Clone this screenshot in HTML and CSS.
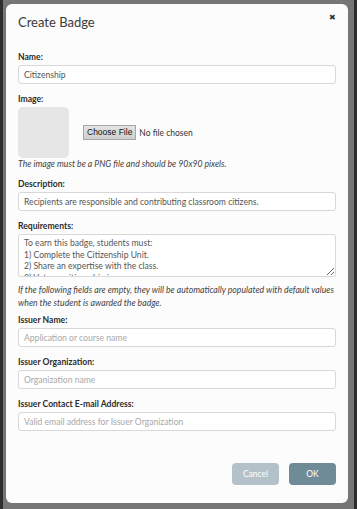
FILE: index.html
```html
<!DOCTYPE html>
<html lang="en">
<head>
  <meta charset="UTF-8">
  <title>Create Badge</title>
  <link rel="stylesheet" href="styles.css">
</head>
<body>
  <div class="backdrop">
    <div class="modal">
      <div class="modal-header">
        <h2>Create Badge</h2>
        <span class="close">&#x2716;</span>
      </div>

      <form class="modal-body">
        <label>Name:</label>
        <input type="text" value="Citizenship">

        <label>Image:</label>
        <div class="image-row">
          <div class="image-box"></div>
          <span class="file-btn">Choose File</span>
          <span class="file-name">No file chosen</span>
        </div>
        <p class="note">The image must be a PNG file and should be 90x90 pixels.</p>

        <label>Description:</label>
        <input type="text" value="Recipients are responsible and contributing classroom citizens.">

        <label>Requirements:</label>
        <textarea>To earn this badge, students must:
1) Complete the Citizenship Unit.
2) Share an expertise with the class.
3) Vote on citizenship issues.</textarea>

        <p class="note note-wide">If the following fields are empty, they will be automatically populated with default values when the student is awarded the badge.</p>

        <label>Issuer Name:</label>
        <input type="text" placeholder="Application or course name">

        <label>Issuer Organization:</label>
        <input type="text" placeholder="Organization name">

        <label>Issuer Contact E-mail Address:</label>
        <input type="text" placeholder="Valid email address for Issuer Organization">
      </form>

      <div class="modal-footer">
        <button type="button" class="btn btn-cancel">Cancel</button>
        <button type="button" class="btn btn-ok">OK</button>
      </div>
    </div>
  </div>
</body>
</html>
```

FILE: styles.css
```css
html, body {
  margin: 0;
  padding: 0;
  height: 100%;
}

body {
  background: #2e2e2e;
  font-family: "Lato", "Noto Sans", sans-serif;
  color: #333;
}

.backdrop {
  box-sizing: border-box;
  height: 509px;
  margin: 0 3px;
  padding: 4px 3px 6px 3px;
  background: #767676;
}

.modal {
  box-sizing: border-box;
  height: 499px;
  width: 342px;
  background: #fcfcfc;
  border-radius: 6px;
  padding: 8px 12px 18px 12px;
  display: flex;
  flex-direction: column;
}

.modal-header {
  display: flex;
  justify-content: space-between;
  align-items: flex-start;
  height: 30px;
}

.modal-header h2 {
  margin: 0;
  font-size: 13px;
  line-height: 20px;
  font-weight: 400;
  color: #3a3a3a;
}

.close {
  font-size: 8px;
  line-height: 10px;
  margin-top: 0;
  color: #333;
}

.modal-body {
  display: flex;
  flex-direction: column;
  margin-top: 10px;
}

label {
  font-size: 8.6px;
  font-weight: 700;
  line-height: 10px;
  color: #2c2c2c;
  margin-top: 10px;
  margin-bottom: 3px;
}

label:first-child {
  margin-top: 0;
}

input, textarea {
  box-sizing: border-box;
  width: 100%;
  height: 19px;
  border: 1px solid #d8d8d8;
  border-radius: 3px;
  background: #fff;
  font-family: "Lato", "Noto Sans", sans-serif;
  font-size: 8.6px;
  color: #555;
  padding: 0 5px;
  margin: 0;
}

input::placeholder {
  color: #a8a8a8;
}

textarea {
  height: 43px;
  padding: 3px 5px;
  line-height: 11.5px;
  resize: vertical;
  overflow: hidden;
}

.image-row {
  display: flex;
  align-items: center;
}

.image-box {
  width: 51px;
  height: 51px;
  background: #e6e6e6;
  border-radius: 5px;
}

.file-btn {
  margin-left: 14px;
  padding: 1px 3px;
  font-family: "Liberation Sans", sans-serif;
  font-size: 8.5px;
  line-height: 11px;
  color: #111;
  background: linear-gradient(#e4e4e4, #cfcfcf);
  border: 1px solid #a6a6a6;
}

.file-name {
  margin-left: 3px;
  font-size: 8.5px;
  color: #333;
}

.note {
  margin: 1px 0 0 0;
  font-size: 8.7px;
  line-height: 10px;
  font-style: italic;
  color: #444;
}

.note-wide {
  margin-top: 6px;
  line-height: 13px;
}

.note-wide + label {
  margin-top: 6px;
}

.modal-footer {
  margin-top: auto;
  display: flex;
  justify-content: flex-end;
  gap: 10px;
}

.btn {
  width: 47px;
  height: 22px;
  border: none;
  border-radius: 4px;
  font-family: "Lato", "Noto Sans", sans-serif;
  font-size: 8.5px;
  color: #fff;
  cursor: pointer;
}

.btn-cancel {
  background: #b3c2c9;
}

.btn-ok {
  background: #6f8b98;
}
```
